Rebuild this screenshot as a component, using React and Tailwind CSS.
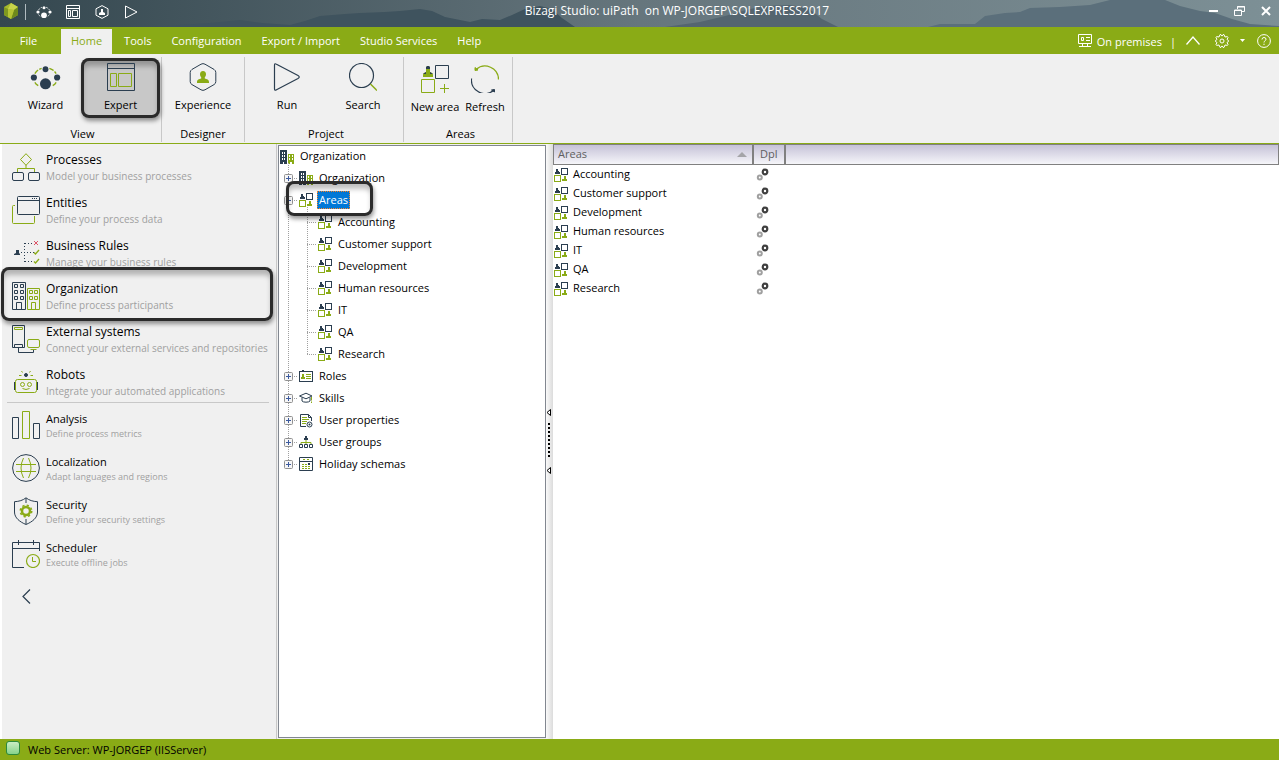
import { useState } from 'react';

const NAVY = '#2b3e50';
const GREEN = '#8aab16';

const areas = ['Accounting', 'Customer support', 'Development', 'Human resources', 'IT', 'QA', 'Research'];

/* ---------- small shared icons ---------- */

const AreaIcon = () => (
  <svg width="14" height="14" viewBox="0 0 14 14" className="shrink-0" fill="none">
    <path d="M2 1h2v2h1v1h1v2H1V4h1z" fill={NAVY} />
    <rect x="7.5" y="0.5" width="6" height="6" stroke={NAVY} />
    <rect x="0.5" y="7.5" width="6" height="6" stroke={GREEN} />
    <path d="M10 8h2v3h1v2H8v-2h2z" fill={GREEN} />
  </svg>
);

const OrgSmallIcon = () => (
  <svg width="14" height="14" viewBox="0 0 14 14" className="shrink-0">
    <path d="M0 0h7v14H0z" fill={NAVY} />
    <path d="M2 2h1v2H2zM4 2h1v2H4zM2 5h1v2H2zM4 5h1v2H4zM2 8h1v2H2zM4 8h1v2H4zM3 12h1v2H3z" fill="#fff" />
    <path d="M8 4h6v10H8z" fill={GREEN} />
    <path d="M9 5h1v2H9zM12 5h1v2h-1zM9 8h1v2H9zM12 8h1v2h-1zM10 12h2v2h-2z" fill="#fff" />
  </svg>
);

const RolesIcon = () => (
  <svg width="14" height="14" viewBox="0 0 14 14" className="shrink-0" fill="none">
    <rect x="0.500" y="2.500" width="13" height="10" stroke={NAVY} />
    <path d="M3 1h2v2H3z" fill={NAVY} />
    <path d="M3 5h2v3h1v2H2V8h1z" fill={GREEN} />
    <path d="M7 5.500h5M7 7.500h5M7 9.500h5" stroke={GREEN} />
  </svg>
);

const SkillsIcon = () => (
  <svg width="14" height="14" viewBox="0 0 14 14" className="shrink-0" fill="none">
    <path d="M0.500 5L7 2.200 13 5 7 7.800z" stroke={NAVY} />
    <path d="M3 6.500V10c1 1.600 7 1.600 8 0V6.500" stroke={NAVY} />
    <path d="M12.500 6v3.500M12.500 10.500V12" stroke={GREEN} />
  </svg>
);

const PropertiesIcon = () => (
  <svg width="14" height="15" viewBox="0 0 14 15" className="shrink-0" fill="none">
    <path d="M12.500 8V4.500L9.500 1.500h-8v12H7" stroke={NAVY} />
    <path d="M9.500 1.500v3h3" stroke={NAVY} />
    <path d="M3 4.500h5M3 6.500h7M3 8.500h5M3 10.500h4" stroke={GREEN} />
    <circle cx="10.500" cy="11.500" r="2.500" stroke={NAVY} />
    <circle cx="10.500" cy="11.500" r="1" fill={NAVY} />
  </svg>
);

const GroupsIcon = () => (
  <svg width="14" height="14" viewBox="0 0 14 14" className="shrink-0" fill="none">
    <path d="M6 1h2v2h1v2H5V3h1z" fill={NAVY} />
    <path d="M7 5v4M2 9V7.500h10V9" stroke={GREEN} />
    <path d="M0.500 9.500h3v3h-3zM5.500 9.500h3v3h-3zM10.500 9.500h3v3h-3z" stroke={NAVY} />
  </svg>
);

const HolidayIcon = () => (
  <svg width="14" height="14" viewBox="0 0 14 14" className="shrink-0" fill="none">
    <path d="M0.500 0.500h13v13H0.500zM0.500 4.500h13" stroke={NAVY} />
    <path d="M4 2h2v1H4zM8 2h2v1H8z" fill={GREEN} />
    <path d="M3 7h2v1H3zM6 7h2v1H6zM3 9h2v1H3zM6 9h2v1H6zM9 9h2v1H9zM3 11h2v1H3zM6 11h2v1H6zM9 11h2v1H9z" fill={GREEN} />
    <path d="M9 6h2v2H9z" fill={NAVY} />
  </svg>
);

const CogsIcon = () => (
  <svg width="14" height="14" viewBox="0 0 14 14" className="block" fill="none">
    <circle cx="9" cy="4" r="2.300" stroke="#3f3f3f" strokeWidth="2.200" />
    <circle cx="3.800" cy="9.500" r="2" stroke="#a0a0a0" strokeWidth="2" />
  </svg>
);

/* ---------- ribbon icons ---------- */

const WizardGlyph = ({ size = 31, dot = NAVY, arc = GREEN }) => (
  <svg width={size} height={size} viewBox="0 0 32 32" fill="none">
    <path d="M5 12c2-3 4-4.500 7-5.500M20 6.500c3 1 5 2.500 7 5.500M5 21c1 1.800 2.500 3 4.500 4M27 21c-1 1.800-2.500 3-4.500 4" stroke={arc} strokeWidth="1.400" strokeDasharray="5 1.500" />
    <circle cx="16" cy="7.500" r="3" fill={dot} />
    <circle cx="4" cy="16" r="3.200" fill={dot} />
    <circle cx="28" cy="16" r="3.200" fill={dot} />
    <circle cx="16" cy="22.500" r="5.700" fill={dot} />
  </svg>
);

const ExpertGlyph = () => (
  <svg width="28" height="28" viewBox="0 0 28 28" fill="none">
    <path d="M0.500 0.500h27v27H0.500zM0.500 5.500h27" stroke={NAVY} />
    <path d="M3.500 10.500h6v13h-6zM11.500 10.500h13v13h-13z" stroke={GREEN} />
  </svg>
);

const ExperienceGlyph = () => (
  <svg width="28" height="28" viewBox="0 0 28 28" fill="none">
    <path d="M12 1.200q2-1.200 4 0l9 5.200q1.800 1.200 1.800 3v9.200q0 2-1.800 3l-9 5.200q-2 1.200-4 0l-9-5.200q-1.800-1-1.800-3V9.400q0-1.800 1.800-3z" stroke={NAVY} />
    <path d="M14 8c2 0 3 1.400 3 3.200 0 1.500-.6 2.300-1.200 3v1.300c2 .6 4.200 1 4.200 3.500v1H8v-1c0-2.500 2.200-2.900 4.200-3.500v-1.300c-.6-.7-1.200-1.500-1.200-3C11 9.400 12 8 14 8z" fill={GREEN} />
  </svg>
);

const RunGlyph = () => (
  <svg width="28" height="28" viewBox="0 0 28 28" fill="none">
    <path d="M1.500 2.200q0-2.200 2-1L25 12.500q2.500 1.500 0 3L3.500 26.800q-2 1.200-2-1z" stroke={NAVY} strokeWidth="1.200" />
  </svg>
);

const SearchGlyph = () => (
  <svg width="28" height="28" viewBox="0 0 28 28" fill="none">
    <circle cx="12.500" cy="12.500" r="12" stroke={NAVY} strokeWidth="1.200" />
    <path d="M21.500 21l6.500 6.500" stroke={GREEN} strokeWidth="1.500" />
  </svg>
);

const NewAreaGlyph = () => (
  <svg width="28" height="28" viewBox="0 0 28 28" fill="none">
    <path d="M5 3c0-1.300 1-2 2-2s2 .7 2 2v4c1.500.4 3 1.200 3 3v2H2v-2c0-1.800 1.500-2.600 3-3z" fill={GREEN} />
    <path d="M5 2.500C5 1.500 6 1 7 1s2 .5 2 1.500V4H5zM2 9l3-2v2zM12 9L9 7v2z" fill={NAVY} />
    <path d="M14.500 0.500h13v13h-13z" stroke={NAVY} />
    <path d="M0.500 14.500h13v13h-13zM23.500 19v9M19 23.500h9" stroke={GREEN} />
  </svg>
);

const RefreshGlyph = () => (
  <svg width="28" height="28" viewBox="0 0 28 28" fill="none">
    <path d="M27.500 14.500A13.500 13.500 0 0 0 5 4.500" stroke={GREEN} strokeWidth="1.300" />
    <path d="M4 5.500V2.500L7 5z" fill={GREEN} stroke={GREEN} />
    <path d="M0.500 13.500A13.500 13.500 0 0 0 23 25" stroke={NAVY} strokeWidth="1.300" />
    <path d="M23.500 24.500v2.500l-3-2z" fill={NAVY} stroke={NAVY} />
  </svg>
);

/* ---------- sidebar icons ---------- */

const NavIcon = ({ children }) => (
  <svg width="28" height="28" viewBox="0 0 28 28" fill="none" className="shrink-0">
    {children}
  </svg>
);

const navMain = [
  {
    title: 'Processes',
    text: 'Model your business processes',
    icon: (
      <NavIcon>
        <path d="M14 0.700L19.500 6.500 14 12.300 8.500 6.500z" stroke={GREEN} />
        <path d="M14 12v3.500M5.500 19v-3.500h17V19" stroke={GREEN} />
        <rect x="0.500" y="19.500" width="11" height="8" rx="1.500" stroke={NAVY} />
        <rect x="16.500" y="19.500" width="11" height="8" rx="1.500" stroke={NAVY} />
      </NavIcon>
    ),
  },
  {
    title: 'Entities',
    text: 'Define your process data',
    icon: (
      <NavIcon>
        <path d="M3 9.500H1.500q-1 0-1 1v16q0 1 1 1h20q1 0 1-1V20" stroke={GREEN} />
        <rect x="5.500" y="0.500" width="22" height="18" rx="1" stroke={NAVY} />
        <path d="M5.500 4.500h22" stroke={NAVY} />
        <path d="M20 2.500h6" stroke={NAVY} strokeDasharray="1 1" />
      </NavIcon>
    ),
  },
  {
    title: 'Business Rules',
    text: 'Manage your business rules',
    icon: (
      <NavIcon>
        <path d="M4 11h3v3l1 1v1H2v-1l2-1z" fill={NAVY} />
        <path d="M9 13.500h14M12.500 4v19M13 4.500h8M13 22.500h8" stroke={NAVY} strokeDasharray="1 2" />
        <path d="M22 2l4 4M26 2l-4 4" stroke="#dc5468" />
        <path d="M22 13.500l1.500 1.500 3.500-4M22 22.500l1.500 1.500 3.500-4" stroke={GREEN} strokeWidth="1.300" />
      </NavIcon>
    ),
  },
  {
    title: 'Organization',
    text: 'Define process participants',
    marked: true,
    icon: (
      <NavIcon>
        <path d="M0.500 0.500h13v27H0.500z" stroke={NAVY} />
        <path d="M2.500 2.500h3v3h-3zM8.500 2.500h3v3h-3zM2.500 8.500h3v3h-3zM8.500 8.500h3v3h-3zM2.500 14.500h3v3h-3zM8.500 14.500h3v3h-3zM4.500 27v-6.500h5V27" stroke={NAVY} />
        <path d="M15.500 6.500h12v21h-12z" stroke={GREEN} />
        <path d="M17.500 8.500h3v3h-3zM22.500 8.500h3v3h-3zM17.500 14.500h3v3h-3zM22.500 14.500h3v3h-3zM19.500 27v-6.500h4V27" stroke={GREEN} />
      </NavIcon>
    ),
  },
  {
    title: 'External systems',
    text: 'Connect your external services and repositories',
    icon: (
      <NavIcon>
        <path d="M0.500 0.500h12v22h-12zM2.500 22v-2.500h8V22M6.500 23v4.500h15V25" stroke={NAVY} />
        <path d="M2.500 2.500h8v2h-8z" stroke={GREEN} />
        <rect x="15.500" y="14.500" width="12" height="8" rx="1.500" stroke={GREEN} />
        <path d="M18.500 24.500h6" stroke={GREEN} />
      </NavIcon>
    ),
  },
  {
    title: 'Robots',
    text: 'Integrate your automated applications',
    icon: (
      <NavIcon>
        <rect x="3.500" y="11.500" width="21" height="13" rx="2" stroke={GREEN} />
        <path d="M2.500 14v8M25.500 14v8" stroke={NAVY} />
        <circle cx="10.500" cy="16.500" r="2" stroke={GREEN} />
        <circle cx="17.500" cy="16.500" r="2" stroke={GREEN} />
        <path d="M10.500 20.500q3.500 2 7 0M7 7.500h2.500M18.500 7.500H21M9.500 3l1 1.500M18.500 3l-1 1.500" stroke={GREEN} />
        <circle cx="14" cy="7" r="1.500" fill={NAVY} stroke={NAVY} />
      </NavIcon>
    ),
  },
];

const navExtra = [
  {
    title: 'Analysis',
    text: 'Define process metrics',
    icon: (
      <NavIcon>
        <path d="M0.500 6.500h6v21h-6zM21.500 12.500h6v15h-6z" stroke={NAVY} />
        <path d="M10.500 0.500h7v27h-7z" stroke={GREEN} />
      </NavIcon>
    ),
  },
  {
    title: 'Localization',
    text: 'Adapt languages and regions',
    icon: (
      <NavIcon>
        <circle cx="14" cy="14" r="13.400" stroke={NAVY} />
        <path d="M4 10.500h20M4 17.500h20M11.500 4q-5 10 0 20M16.500 4q5 10 0 20" stroke={GREEN} />
      </NavIcon>
    ),
  },
  {
    title: 'Security',
    text: 'Define your security settings',
    icon: (
      <NavIcon>
        <path d="M14 0.800c-3 2.500-7 3.700-11.500 3.900V15c0 6 5.500 10 11.500 12.500C20 25 25.500 21 25.500 15V4.700C21 4.500 17 3.300 14 .8zM14 1v5M14 22v5" stroke={NAVY} />
        <circle cx="14" cy="14" r="4" stroke={GREEN} strokeWidth="2.500" />
        <circle cx="14" cy="14" r="5.700" stroke={GREEN} strokeWidth="1.600" strokeDasharray="2.240 2.240" />
      </NavIcon>
    ),
  },
  {
    title: 'Scheduler',
    text: 'Execute offline jobs',
    icon: (
      <NavIcon>
        <path d="M12 27.500H0.500v-25h27V11M0.500 8.500h27M6.500 0v5M21.500 0v5" stroke={NAVY} />
        <circle cx="21" cy="21" r="6.500" stroke={GREEN} strokeWidth="1.200" />
        <path d="M20.500 17v4.500H24" stroke={GREEN} />
      </NavIcon>
    ),
  },
];

const treeNodes = [
  { label: 'Organization', icon: <OrgSmallIcon /> },
  { label: 'Areas', icon: <AreaIcon />, children: areas },
  { label: 'Roles', icon: <RolesIcon /> },
  { label: 'Skills', icon: <SkillsIcon /> },
  { label: 'User properties', icon: <PropertiesIcon /> },
  { label: 'User groups', icon: <GroupsIcon /> },
  { label: 'Holiday schemas', icon: <HolidayIcon /> },
];

const ribbon = [
  {
    name: 'View',
    box: 'w-[162px] pl-[10px]',
    items: [
      { label: 'Wizard', width: 'w-[71px]', icon: <WizardGlyph /> },
      { label: 'Expert', width: 'w-[79px]', icon: <ExpertGlyph />, marked: true },
    ],
  },
  { name: 'Designer', box: 'w-[83px]', items: [{ label: 'Experience', width: 'w-full', icon: <ExperienceGlyph /> }] },
  {
    name: 'Project',
    box: 'w-[159px] pl-1',
    items: [
      { label: 'Run', width: 'w-[76px]', icon: <RunGlyph /> },
      { label: 'Search', width: 'w-[76px]', icon: <SearchGlyph /> },
    ],
  },
  {
    name: 'Areas',
    box: 'w-[109px] pl-[5px]',
    lower: true,
    items: [
      { label: 'New area', width: 'w-[52px]', icon: <NewAreaGlyph /> },
      { label: 'Refresh', width: 'w-[48px]', icon: <RefreshGlyph /> },
    ],
  },
];

const menu = ['Tools', 'Configuration', 'Export / Import', 'Studio Services', 'Help'];

const markedShadow =
  'rounded-lg shadow-[inset_0_0_0_3px_#2b2b2b,inset_0_6px_5px_2px_rgba(0,0,0,0.25),1px_3px_4px_rgba(0,0,0,0.4)]';

const TitleBar = () => (
  <header className="relative flex h-[27px] shrink-0 items-center overflow-hidden bg-linear-to-r from-[#34474f] via-[#66767d] to-[#7d9096] text-white">
    <svg className="absolute inset-0 h-full w-full" viewBox="0 0 1279 27" preserveAspectRatio="none" aria-hidden="true">
      <path d="M155 27L180 25 210 23 240 20 262 23 290 25 305 21 320 16 345 14 360 13 385 12 400 11 420 9 432 11 445 17 470 22 482 19 500 20 512 15 525 9 540 6 552 9 562 18 575 27z" fill="#3f535e" />
      <path d="M665 27L700 22 725 16 750 9 765 6 790 5 808 8 822 19 838 27z" fill="#54656f" />
      <path d="M928 27L940 24 975 24 985 16 1005 13 1020 12 1030 8 1060 7 1090 5 1110 0 1165 0 1180 6 1200 11 1215 13 1232 19 1250 24 1279 26V27z" fill="#5b6f7b" />
    </svg>
    <div className="relative flex items-center">
      <svg width="14" height="16" viewBox="0 0 14 16" className="mb-[5px] ml-1">
        <path d="M7 0l7 4v8l-7 4-7-4V4z" fill="#a5b92c" />
        <path d="M7 0l7 4-4 3-6-1z" fill="#c8d44a" />
        <path d="M0 4l4 2v8L0 12z" fill="#7f9820" />
        <path d="M10 7l4-3v8l-7 4z" fill="#6e8a1c" />
        <path d="M4 6l6 1-3 9-3-2z" fill="#b5c535" />
      </svg>
      <span className="mb-[3px] ml-[7px] h-4 w-px bg-[#b0bbc0]" />
      <div className="flex items-center pb-[3px]">
        <button aria-label="Wizard" className="ml-[10px]"><WizardGlyph size={16} dot="#fff" arc="#fff" /></button>
        <button aria-label="Expert" className="ml-[14px]">
          <svg width="14" height="14" viewBox="0 0 14 14" fill="none" stroke="#fff">
            <path d="M0.500 0.500h13v13H0.500zM0.500 3.500h13M2.500 5.500h2v6h-2zM6.500 5.500h5v6h-5z" />
          </svg>
        </button>
        <button aria-label="Experience" className="ml-[15px]">
          <svg width="14" height="14" viewBox="0 0 14 14" fill="none">
            <path d="M7 0.600l6 3.200v6.400l-6 3.200-6-3.200V3.800z" stroke="#fff" />
            <path d="M6 4h2v3l2 1v2H4V8l2-1z" fill="#fff" />
          </svg>
        </button>
        <button aria-label="Run" className="ml-[15px]">
          <svg width="14" height="14" viewBox="0 0 14 14" fill="none" stroke="#fff">
            <path d="M1.500 1v12L13 7z" />
          </svg>
        </button>
      </div>
    </div>
    <h1 className="relative flex-1 pb-[6px] pl-2 text-center text-xs leading-4 whitespace-pre">
      {'Bizagi Studio: uiPath  on WP-JORGEP\\SQLEXPRESS2017'}
    </h1>
    <div className="relative mr-2 flex items-center gap-4 pb-[5px]">
      <button aria-label="Minimize">
        <svg width="10" height="10" viewBox="0 0 10 10"><path d="M1 4h9v2H1z" fill="#fff" /></svg>
      </button>
      <button aria-label="Restore">
        <svg width="11" height="10" viewBox="0 0 11 10" fill="none" stroke="#fff">
          <path d="M3.500 3V.5h7v5H8M3 1h8" />
          <path d="M0.500 4h7v5.500h-7zM0 4.500h8" />
        </svg>
      </button>
      <button aria-label="Close">
        <svg width="10" height="10" viewBox="0 0 10 10"><path d="M1 1l8 8M9 1L1 9" stroke="#fff" strokeWidth="2" /></svg>
      </button>
    </div>
  </header>
);

const MenuBar = () => (
  <nav className="flex h-[27px] shrink-0 items-stretch bg-[#8aab16] text-[11px] text-white">
    <button className="w-[61px] pt-[2px] pr-1">File</button>
    <button className="mt-[2px] bg-[#f0f0f0] px-[10px] text-[#8aab16]">Home</button>
    <div className="flex pt-[2px] pl-[2px]">
      {menu.map((item) => (
        <button key={item} className="px-[10px]">{item}</button>
      ))}
    </div>
    <div className="ml-auto flex items-center pr-2">
      <svg width="14" height="13" viewBox="0 0 14 13" fill="none" stroke="#fff">
        <path d="M0.500 0.500h13v9H0.500zM4.500 10v2M9.500 10v2M1 12.500h12M3.500 3.500h2v3h-2zM8 3.500h4M8 6.500h4" />
      </svg>
      <span className="ml-[5px] pt-[3px]">On premises</span>
      <span className="ml-2 pt-[3px]">|</span>
      <button aria-label="Collapse ribbon" className="ml-[10px]">
        <svg width="14" height="9" viewBox="0 0 14 9" fill="none" stroke="#fff" strokeWidth="1.300"><path d="M0.500 8.500L7 1l6.500 7.500" /></svg>
      </button>
      <button aria-label="Settings" className="ml-[15px] flex items-center gap-[11px]">
        <svg width="14" height="14" viewBox="0 0 14 14" fill="none" stroke="#fff">
          <path d="M5 .6h1l1 1.500 1-1.500h1l1 2.400 2.400-.4.600 1-1 1.900 1.500 1v1l-1.500 1 1 1.900-.6 1L10 11l-1 2.400H8l-1-1.500-1 1.500H5L4 11l-2.400.4-.6-1 1-1.900-1.500-1v-1l1.500-1-1-1.900.6-1L4 3z" />
          <circle cx="7" cy="7" r="2" />
        </svg>
        <svg width="5" height="3" viewBox="0 0 5 3"><path d="M0 0h5L2.500 3z" fill="#fff" /></svg>
      </button>
      <button aria-label="Help" className="ml-3">
        <svg width="14" height="14" viewBox="0 0 14 14" fill="none" stroke="#fff">
          <circle cx="7" cy="7" r="6.400" />
          <path d="M5 5.500q0-2 2-2t2 1.700q0 1-1 1.600T7 8.500M7 9.700V11" />
        </svg>
      </button>
    </div>
  </nav>
);

const Ribbon = () => (
  <section className="flex h-[90px] shrink-0 border-b border-[#8aab16] bg-[#f0f0f0] pt-[3px] pb-px text-[11px] leading-4 text-black">
    {ribbon.map((group) => (
      <div key={group.name} className={`flex flex-col border-r border-[#c8c8c8] ${group.box}`}>
        <div className="flex pt-px">
          {group.items.map((item) => (
            <button
              key={item.label}
              className={`flex h-[60px] flex-col items-center whitespace-nowrap ${group.lower ? 'pt-[7px]' : 'pt-[5px]'} ${item.width} ${item.marked ? `bg-[#c8c8c8] ${markedShadow}` : ''}`}
            >
              <span className="mb-[6px] flex h-7 items-center justify-center">{item.icon}</span>
              {item.label}
            </button>
          ))}
        </div>
        <h2 className={`mt-auto text-center ${group.name === 'View' ? 'pr-[6px]' : ''}`}>{group.name}</h2>
      </div>
    ))}
  </section>
);

const NavItem = ({ item, small }) => (
  <li className="relative">
    <button className="flex h-[43px] w-full items-center gap-[6px] pl-[10px] text-left">
      {item.icon}
      <span className="flex flex-col pt-[2px] whitespace-nowrap">
        <span className={small ? 'text-[11px] leading-[15px] text-black' : 'text-xs leading-4 text-black'}>{item.title}</span>
        <span className={small ? 'text-[9px] leading-[15px] text-[#a0a0a0]' : 'text-[10px] leading-4 text-[#a0a0a0]'}>{item.text}</span>
      </span>
    </button>
    {item.marked && <span className={`pointer-events-none absolute -top-[7px] right-[3px] -bottom-1 -left-px z-10 ${markedShadow}`} />}
  </li>
);

const Sidebar = () => (
  <aside className="w-[277px] shrink-0 border-r border-l-2 border-r-[#c8c8c8] border-l-white bg-[#f0f0f0] pt-px">
    <ul>{navMain.map((item) => <NavItem key={item.title} item={item} />)}</ul>
    <hr className="-mt-px mr-[7px] ml-[5px] border-[#c8c8c8]" />
    <ul>{navExtra.map((item) => <NavItem key={item.title} item={item} small />)}</ul>
    <button aria-label="Collapse panel" className="mt-[14px] ml-5">
      <svg width="9" height="15" viewBox="0 0 9 15" fill="none" stroke={NAVY} strokeWidth="1.200"><path d="M8 0.500L1 7.500l7 7" /></svg>
    </button>
  </aside>
);

const Expander = ({ open, onClick, label }) => (
  <button onClick={onClick} aria-label={`Toggle ${label}`} className="relative z-[1] ml-[5px] shrink-0">
    <svg width="9" height="9" viewBox="0 0 9 9" fill="none" className="block">
      <rect x="0.500" y="0.500" width="8" height="8" rx="1" fill="#f6f6f6" stroke="#919191" />
      <path d={open ? 'M2 4.500h5' : 'M2 4.500h5M4.500 2v5'} stroke="#3c5a9e" />
    </svg>
  </button>
);

const vDots = 'bg-[repeating-linear-gradient(to_bottom,#a0a0a0_0_1px,transparent_1px_2px)]';
const hDots = 'bg-[repeating-linear-gradient(to_right,#a0a0a0_0_1px,transparent_1px_2px)]';

const Tree = () => {
  const [open, setOpen] = useState(true);

  return (
    <section className="my-px ml-px w-[268px] shrink-0 border border-[#828790] bg-white text-[11px] text-black">
      <div className="flex h-[21px] items-center gap-[6px] pl-px">
        <OrgSmallIcon />
        Organization
      </div>
      <ul className="relative">
        <li aria-hidden="true" className={`absolute -top-1 bottom-[11px] left-[9px] w-px ${vDots}`} />
        {treeNodes.map((node) => (
          <li key={node.label}>
            <div className="relative flex h-[22px] items-center">
              <Expander open={node.children && open} label={node.label} onClick={() => node.children && setOpen(!open)} />
              <span className={`mr-px ml-px h-px w-1 ${hDots}`} />
              {node.icon}
              {node.children ? (
                <span className="ml-1 h-[18px] border border-dotted border-[#ff8728] bg-[#0078d7] px-px leading-4 text-white">{node.label}</span>
              ) : (
                <span className="ml-[6px]">{node.label}</span>
              )}
              {node.children && (
                <span className={`pointer-events-none absolute -top-2 left-[7px] z-10 h-[35px] w-[87px] ${markedShadow}`} />
              )}
            </div>
            {node.children && open && (
              <ul className="relative">
                <li aria-hidden="true" className={`absolute -top-1 bottom-[11px] left-7 w-px ${vDots}`} />
                {node.children.map((child) => (
                  <li key={child} className="flex h-[22px] items-center pl-7">
                    <span className={`mr-px h-px w-[10px] ${hDots}`} />
                    <AreaIcon />
                    <span className="ml-[6px]">{child}</span>
                  </li>
                ))}
              </ul>
            )}
          </li>
        ))}
      </ul>
    </section>
  );
};

const Splitter = () => (
  <div className="flex w-[7px] shrink-0 flex-col items-start justify-center bg-linear-to-r from-[#fafafa] to-[#dcdcdc]">
    <svg width="5" height="65" viewBox="0 0 5 65">
      <path d="M4.500 0.500v6L1 3.500zM4.500 58.500v6L1 61.500z" fill="#fff" stroke="#000" />
      <path d="M3 14v35" stroke="#000" strokeWidth="2" strokeDasharray="2 2" />
    </svg>
  </div>
);

const AreasTable = () => (
  <section className="min-w-0 flex-1 bg-white">
    <table className="w-full table-fixed border-separate border-spacing-0 text-left text-[11px] text-black">
      <thead>
        <tr className="h-[21px] bg-linear-to-b from-[#c4c0d6] to-[#f8f8fb] text-[#5f5f5f]">
          <th className="w-[200px] border border-[#808080] px-1 py-0 font-normal">
            <span className="flex items-center justify-between pr-px">
              Areas
              <svg width="10" height="5" viewBox="0 0 10 5"><path d="M5 0l5 5H0z" fill="#a4a4a8" /></svg>
            </span>
          </th>
          <th className="w-8 border border-[#808080] py-0 pr-1 pl-[6px] font-normal">Dpl</th>
          <td className="border border-[#808080] p-0" />
        </tr>
      </thead>
      <tbody>
        {areas.map((area) => (
          <tr key={area} className="h-[19px]">
            <td className="p-0 pl-px">
              <span className="flex items-center gap-[5px]"><AreaIcon />{area}</span>
            </td>
            <td className="p-0 pl-[3px]"><CogsIcon /></td>
            <td className="p-0" />
          </tr>
        ))}
      </tbody>
    </table>
  </section>
);

export default function App() {
  return (
    <div className="flex min-h-screen flex-col bg-[#f0f0f0] font-['Open_Sans',sans-serif]">
      <TitleBar />
      <MenuBar />
      <Ribbon />
      <main className="flex flex-1">
        <Sidebar />
        <Tree />
        <Splitter />
        <AreasTable />
      </main>
      <footer className="flex h-[21px] shrink-0 items-center bg-[#8aab16] pl-[6px] text-[11px] text-black">
        <span className="mr-2 mb-1 h-[14px] w-[14px] rounded-[3px] border border-[#2c8a3c] bg-linear-to-b from-[#c9ecc4] to-[#86d38a]" />
        <span className="pt-[2px]">Web Server: WP-JORGEP (IISServer)</span>
      </footer>
    </div>
  );
}
